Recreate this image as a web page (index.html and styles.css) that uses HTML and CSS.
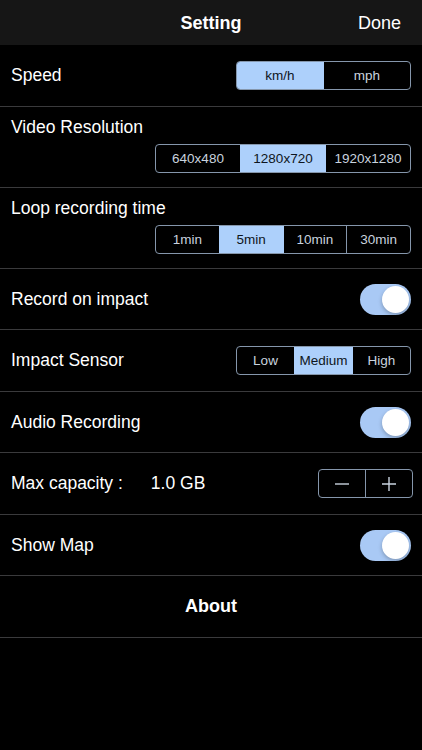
FILE: index.html
```html
<!DOCTYPE html>
<html lang="en">
<head>
  <meta charset="UTF-8">
  <meta name="viewport" content="width=device-width, initial-scale=1.0">
  <title>Setting</title>
  <link rel="stylesheet" href="styles.css">
</head>
<body>
  <header class="navbar">
    <span class="nav-spacer"></span>
    <h1 class="nav-title">Setting</h1>
    <span class="nav-done">Done</span>
  </header>

  <div class="list">
    <div class="row">
      <span class="label">Speed</span>
      <div class="segment seg-speed">
        <span class="seg-item active">km/h</span>
        <span class="seg-item">mph</span>
      </div>
    </div>

    <div class="row row-tall">
      <span class="label">Video Resolution</span>
      <div class="segment seg-wide">
        <span class="seg-item">640x480</span>
        <span class="seg-item active">1280x720</span>
        <span class="seg-item">1920x1280</span>
      </div>
    </div>

    <div class="row row-tall">
      <span class="label">Loop recording time</span>
      <div class="segment seg-wide">
        <span class="seg-item">1min</span>
        <span class="seg-item active">5min</span>
        <span class="seg-item">10min</span>
        <span class="seg-item">30min</span>
      </div>
    </div>

    <div class="row">
      <span class="label">Record on impact</span>
      <span class="switch on"><span class="knob"></span></span>
    </div>

    <div class="row">
      <span class="label">Impact Sensor</span>
      <div class="segment seg-speed">
        <span class="seg-item">Low</span>
        <span class="seg-item active">Medium</span>
        <span class="seg-item">High</span>
      </div>
    </div>

    <div class="row">
      <span class="label">Audio Recording</span>
      <span class="switch on"><span class="knob"></span></span>
    </div>

    <div class="row">
      <span class="label">Max capacity :<span class="value">1.0 GB</span></span>
      <div class="stepper">
        <span class="step">
          <svg width="16" height="16" viewBox="0 0 16 16"><path d="M1 8h14" stroke="#c9d3df" stroke-width="1.4"/></svg>
        </span>
        <span class="step">
          <svg width="16" height="16" viewBox="0 0 16 16"><path d="M1 8h14M8 1v14" stroke="#c9d3df" stroke-width="1.4"/></svg>
        </span>
      </div>
    </div>

    <div class="row">
      <span class="label">Show Map</span>
      <span class="switch on"><span class="knob"></span></span>
    </div>

    <div class="row row-center">
      <span class="about">About</span>
    </div>
  </div>
</body>
</html>
```

FILE: styles.css
```css
body {
  margin: 0;
  background: #000;
  color: #fff;
  font-family: "Liberation Sans", Arial, sans-serif;
  width: 422px;
  height: 750px;
  overflow: hidden;
}
.navbar {
  height: 45px;
  background: #161616;
  display: flex;
  align-items: center;
  padding: 2px 21px 0 21px;
  box-sizing: border-box;
}
.nav-spacer {
  flex: 1;
}
.nav-title {
  margin: 0;
  font-size: 18px;
  font-weight: bold;
  text-align: center;
  flex: 1;
}
.nav-done {
  flex: 1;
  text-align: right;
  font-size: 18px;
}
.row {
  height: 61.5px;
  box-sizing: border-box;
  border-bottom: 1px solid #3a3a3c;
  display: flex;
  align-items: center;
  justify-content: space-between;
  padding: 1px 11px 0 11px;
}
.row-tall {
  height: 81px;
  flex-direction: column;
  align-items: stretch;
  justify-content: flex-start;
  padding-top: 10px;
}
.row-tall .segment {
  align-self: flex-end;
  margin-top: 6px;
}
.row-center {
  justify-content: center;
}
.label {
  font-size: 17.5px;
}
.value {
  margin-left: 28px;
}
.about {
  font-size: 18px;
  font-weight: bold;
}
.segment {
  display: flex;
  height: 29px;
  box-sizing: border-box;
  border: 1px solid #8596ab;
  border-radius: 4px;
  overflow: hidden;
}
.seg-speed {
  width: 175px;
}
.seg-wide {
  width: 256px;
}
.seg-item {
  flex: 1;
  display: flex;
  align-items: center;
  justify-content: center;
  font-size: 13.5px;
  color: #c9d3df;
  border-left: 1px solid #8596ab;
}
.seg-item:first-child {
  border-left: none;
}
.seg-item.active {
  background: #add0fb;
  color: #0d1520;
  border-left-color: #add0fb;
}
.seg-item.active + .seg-item {
  border-left-color: #add0fb;
}
.switch {
  width: 51px;
  height: 31px;
  border-radius: 16px;
  background: #a9c9f5;
  display: flex;
  align-items: center;
  justify-content: flex-end;
  padding: 0 2px;
  box-sizing: border-box;
}
.knob {
  width: 27px;
  height: 27px;
  border-radius: 50%;
  background: #fff;
  box-shadow: 0 2px 4px rgba(0,0,0,0.25);
}
.stepper {
  display: flex;
  width: 95px;
  height: 29px;
  box-sizing: border-box;
  border: 1px solid #8596ab;
  border-radius: 4px;
  margin-right: -2px;
}
.step {
  flex: 1;
  display: flex;
  align-items: center;
  justify-content: center;
}
.step + .step {
  border-left: 1px solid #8596ab;
}
```
